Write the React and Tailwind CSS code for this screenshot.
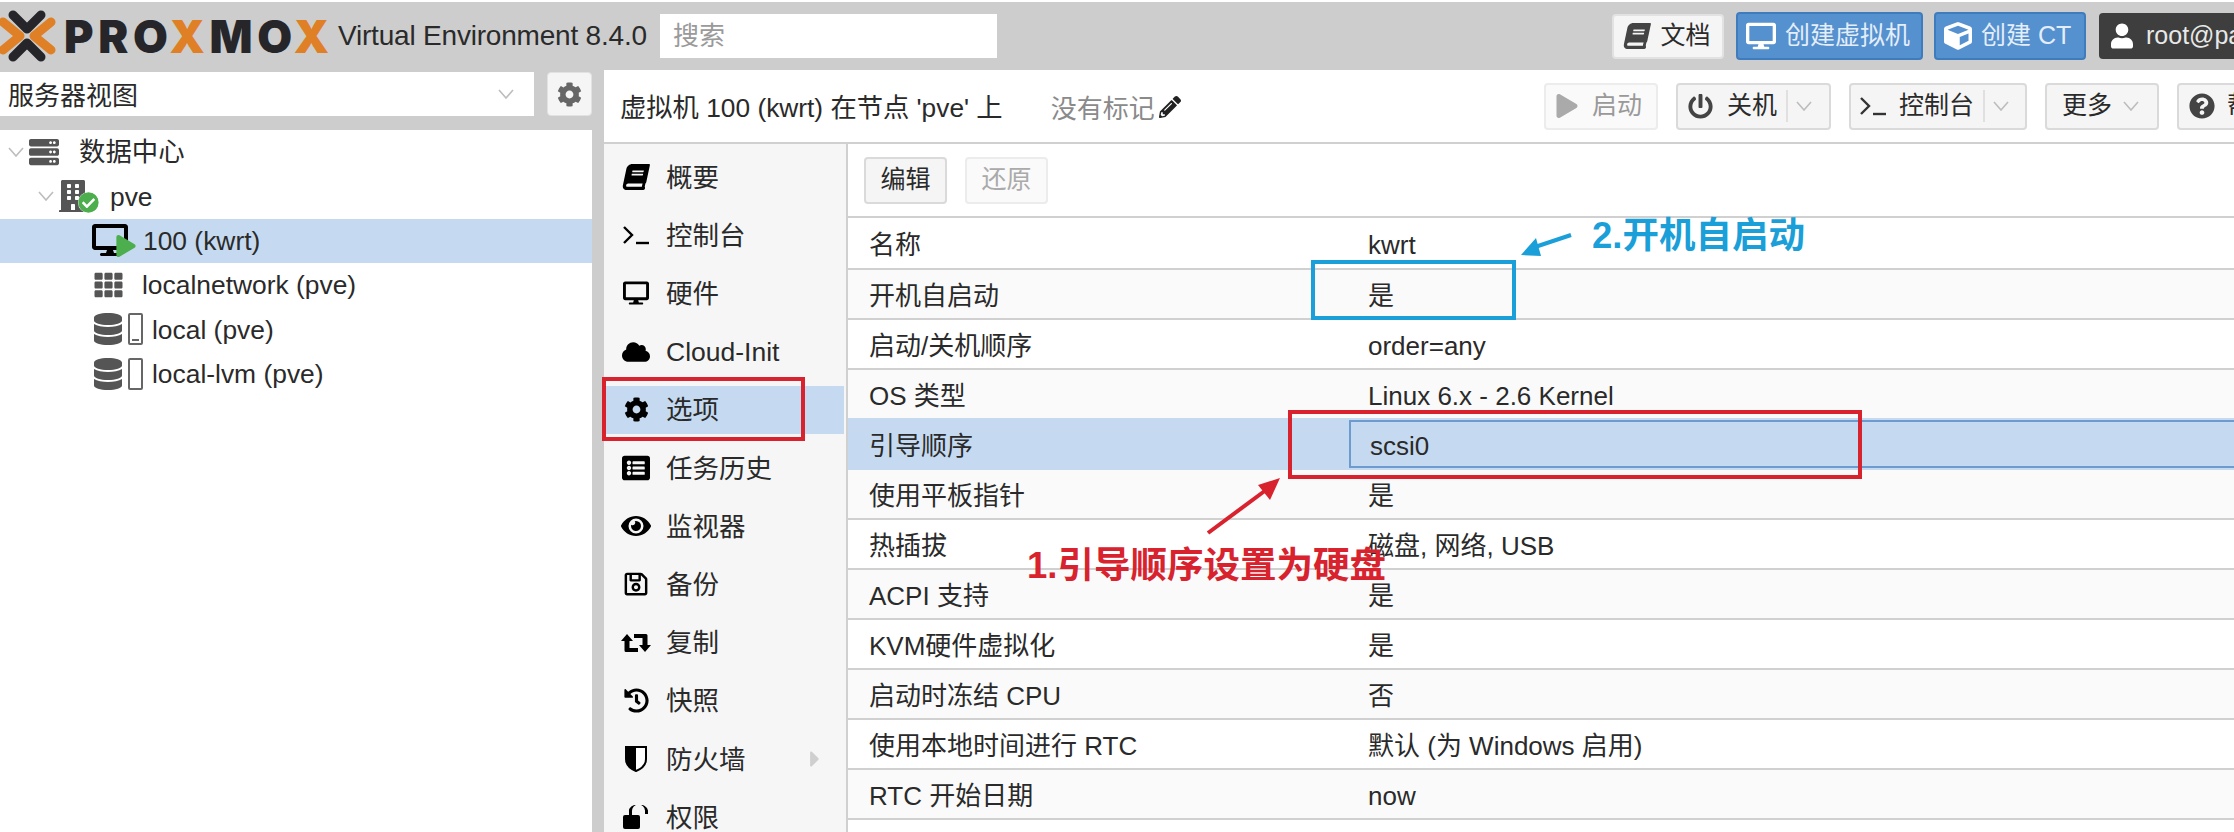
import React from 'react';
import {
    FaBook, FaDesktop, FaCube, FaUser, FaPlay, FaPowerOff, FaQuestionCircle, FaCog, FaCloud,
    FaEye, FaRegSave, FaHistory, FaServer, FaBuilding,
    FaDatabase, FaTh, FaPencilAlt, FaCheckCircle, FaListAlt, FaCaretRight
} from 'react-icons/fa';

const Chevron = ({ className = '' }) => (
    <svg viewBox="0 0 16 10" className={`w-[16px] h-[10px] ${className}`} fill="none" stroke="#bdbdbd" strokeWidth="1.6">
        <path d="M1 1l7 8 7-8" />
    </svg>
);

const Prompt = ({ className = '' }) => (
    <svg viewBox="0 0 26 20" className={`w-[26px] h-[20px] ${className}`} fill="none" stroke="currentColor" strokeWidth="2.4">
        <path d="M1 2l8 8-8 8" />
        <path d="M13 18h13" />
    </svg>
);

const SlantBook = ({ className = '' }) => <FaBook className={`-skew-x-12 ${className}`} />;

const Retweet = () => (
    <svg viewBox="0 0 30 20" className="w-[30px] h-[20px] shrink-0" fill="currentColor">
        <path d="M0 8L6 1l6 7H8.500v7H17v4H5a1.500 1.500 0 0 1-1.500-1.500V8z" />
        <path d="M30 12l-6 7-6-7h3.500V5H13V1h12a1.500 1.500 0 0 1 1.500 1.500V12z" />
    </svg>
);

const HalfShield = ({ className = '' }) => (
    <svg viewBox="0 0 22 26" className={className}>
        <path d="M1 1h20v12c0 6-5 10-10 12C6 23 1 19 1 13z" fill="#fff" stroke="#000" strokeWidth="2" />
        <path d="M1 1h10v24C6 23 1 19 1 13z" fill="#000" />
    </svg>
);

const OpenLock = ({ className = '' }) => (
    <svg viewBox="0 0 26 24" className={className} fill="currentColor">
        <rect x="0" y="10" width="17" height="14" rx="2" />
        <path d="M9 11V6.500a6.500 6.500 0 0 1 13-1V9h3V5.500a8.500 6 0 0 0-19 1V11z" />
    </svg>
);

// orange chevrons on the sides, dark ones above and below
const ProxmoxMark = () => (
    <svg viewBox="0 0 56 56" className="w-[56px] h-[56px] shrink-0" fill="none" strokeWidth="9" strokeLinecap="round" strokeLinejoin="round">
        <path d="M3 14l17 14L3 42" stroke="#e08026" />
        <path d="M51 14L34 28l17 14" stroke="#e08026" />
        <path d="M13 7l14 14L41 7" stroke="#26262a" />
        <path d="M13 49l14-14 14 14" stroke="#26262a" />
    </svg>
);

const treeRows = [
    { name: '数据中心', icon: 'dc', pad: 'pl-[79px]' },
    { name: 'pve', icon: 'node', pad: 'pl-[110px]' },
    { name: '100 (kwrt)', icon: 'vm', pad: 'pl-[143px]', selected: true },
    { name: 'localnetwork (pve)', icon: 'net', pad: 'pl-[142px]' },
    { name: 'local (pve)', icon: 'local', pad: 'pl-[152px]' },
    { name: 'local-lvm (pve)', icon: 'lvm', pad: 'pl-[152px]' },
];

const TreeIcon = ({ type }) => {
    if (type === 'dc') {
        return (
            <span className="absolute left-[8px] flex items-center gap-[4px]">
                <Chevron />
                <FaServer className="w-[32px] h-[30px] text-[#555]" />
            </span>
        );
    }
    if (type === 'node') {
        return (
            <span className="absolute left-[38px] flex items-center gap-[5px]">
                <Chevron />
                <span className="relative w-[40px] h-[32px]">
                    <FaBuilding className="w-[28px] h-[32px] text-[#555]" />
                    <FaCheckCircle className="absolute right-[0px] bottom-[-1px] w-[21px] h-[21px] text-[#4cae4c] bg-white rounded-full" />
                </span>
            </span>
        );
    }
    if (type === 'vm') {
        return (
            <span className="absolute left-[92px] w-[44px] h-[36px]">
                <FaDesktop className="w-[36px] h-[34px] text-black" />
                <FaPlay className="absolute right-[0px] top-[12px] w-[20px] h-[22px] text-[#4cae4c]" />
            </span>
        );
    }
    if (type === 'net') {
        return <FaTh className="absolute left-[92px] w-[33px] h-[28px] text-[#555]" />;
    }
    return (
        <span className="absolute left-[93px] flex items-center gap-[5px]">
            <FaDatabase className="w-[30px] h-[32px] text-[#555]" />
            <span className="relative block w-[15px] h-[32px] border-2 border-[#666] rounded-[2px]">
                {type === 'local' && <span className="absolute bottom-[2px] left-[2px] w-[7px] h-[2px] bg-[#666]" />}
            </span>
        </span>
    );
};

const navItems = [
    { name: '概要', icon: SlantBook, size: 'w-[26px] h-[26px]' },
    { name: '控制台', icon: Prompt },
    { name: '硬件', icon: FaDesktop, size: 'w-[26px] h-[26px]' },
    { name: 'Cloud-Init', icon: FaCloud, size: 'w-[28px] h-[28px]' },
    { name: '选项', icon: FaCog, size: 'w-[25px] h-[25px]', active: true },
    { name: '任务历史', icon: FaListAlt, size: 'w-[28px] h-[28px]' },
    { name: '监视器', icon: FaEye, size: 'w-[30px] h-[30px]' },
    { name: '备份', icon: FaRegSave, size: 'w-[26px] h-[26px]' },
    { name: '复制', icon: Retweet },
    { name: '快照', icon: FaHistory, size: 'w-[25px] h-[25px]' },
    { name: '防火墙', icon: HalfShield, size: 'w-[22px] h-[26px]', more: true },
    { name: '权限', icon: OpenLock, size: 'w-[26px] h-[24px]' },
];

const optionRows = [
    ['名称', 'kwrt'],
    ['开机自启动', '是'],
    ['启动/关机顺序', 'order=any'],
    ['OS 类型', 'Linux 6.x - 2.6 Kernel'],
    ['引导顺序', 'scsi0'],
    ['使用平板指针', '是'],
    ['热插拔', '磁盘, 网络, USB'],
    ['ACPI 支持', '是'],
    ['KVM硬件虚拟化', '是'],
    ['启动时冻结 CPU', '否'],
    ['使用本地时间进行 RTC', '默认 (为 Windows 启用)'],
    ['RTC 开始日期', 'now'],
];

const rowColor = (label, i) => {
    if (label === '引导顺序' || label === 'OS 类型') {
        return label === '引导顺序' ? 'bg-[#c5daf0] border-[#c5daf0]' : 'bg-[#fafafa] border-[#c5daf0]';
    }
    return i % 2 ? 'bg-[#fafafa] border-[#d0d0d0]' : 'bg-white border-[#d0d0d0]';
};

const ToolButton = ({ className = '', children }) => (
    <div className={`h-[47px] flex items-center rounded-[4px] border-2 border-[#dadada] bg-[#f5f5f5] text-[25px] ${className}`}>
        {children}
    </div>
);

const App = () => {
    return (
        <div className="relative w-[2234px] h-[832px] overflow-hidden bg-[#cdcdcd] text-[25px] text-[#2a2a2a] font-['Liberation_Sans','Noto_Sans_CJK_SC',sans-serif]">
            <div className="h-[2px] bg-white" />

            <header className="h-[68px] flex items-center">
                <ProxmoxMark />
                <span className="ml-[8px] w-[268px] text-[45px] leading-none font-black tracking-[4.700px] text-[#26262a] font-['Inter',sans-serif]">
                    PRO<span className="text-[#e08026]">X</span>MO<span className="text-[#e08026]">X</span>
                </span>
                <span className="ml-[6px] w-[322px] text-[28px] tracking-[-0.2px] whitespace-nowrap">Virtual Environment 8.4.0</span>
                <div className="w-[337px] h-[44px] bg-white flex items-center pl-[13px] text-[26px] text-[#9a9a9a]">搜索</div>
                <div className="ml-auto flex items-center">
                    <div className="w-[112px] h-[45px] flex items-center justify-center gap-[11px] rounded-[4px] bg-[#f5f5f5] border-2 border-[#e2e2e2]">
                        <SlantBook className="w-[24px] h-[26px] text-[#444]" />
                        <span>文档</span>
                    </div>
                    <div className="ml-[12px] w-[187px] h-[48px] flex items-center pl-[8px] gap-[9px] rounded-[4px] bg-[#5590cf] border-2 border-[#3f7cbd] text-[#e4eef8]">
                        <FaDesktop className="w-[30px] h-[30px] text-white" />
                        <span>创建虚拟机</span>
                    </div>
                    <div className="ml-[11px] w-[152px] h-[48px] flex items-center pl-[8px] gap-[9px] rounded-[4px] bg-[#5590cf] border-2 border-[#3f7cbd] text-[#e4eef8] whitespace-nowrap">
                        <FaCube className="w-[28px] h-[30px] text-white" />
                        <span>创建 CT</span>
                    </div>
                    <div className="ml-[13px] w-[135px] h-[46px] flex items-center pl-[12px] gap-[13px] rounded-l-[4px] bg-[#3e3e3e] text-[#e8e8e8] overflow-hidden whitespace-nowrap">
                        <FaUser className="w-[22px] h-[26px] text-white shrink-0" />
                        <span>root@pam</span>
                    </div>
                </div>
            </header>

            <div className="flex h-[762px] text-[26px]">
                <aside className="w-[592px] flex flex-col pt-[2px]">
                    <div className="flex justify-between h-[44px]">
                        <div className="w-[534px] bg-white flex items-center justify-between pl-[8px] pr-[20px]">
                            <span className="pt-[5px]">服务器视图</span>
                            <Chevron />
                        </div>
                        <div className="w-[45px] flex items-center justify-center rounded-[4px] bg-[#f5f5f5] border border-[#e2e2e2]">
                            <FaCog className="w-[25px] h-[25px] text-[#666]" />
                        </div>
                    </div>
                    <div className="mt-[14px] flex-1 bg-white text-[26.400px]">
                        {treeRows.map((row) => (
                            <div
                                key={row.name}
                                className={`relative h-[44.3px] flex items-center ${row.pad} ${row.selected ? 'bg-[#c5daf0]' : ''}`}
                            >
                                <TreeIcon type={row.icon} />
                                <span className="pt-[2px]">{row.name}</span>
                            </div>
                        ))}
                    </div>
                </aside>

                <main className="ml-[12px] flex-1 bg-white flex flex-col">
                    <div className="h-[74px] shrink-0 flex items-center border-b-2 border-[#d0d0d0] pl-[16px]">
                        <span className="pt-[6px] text-[26.300px]">虚拟机 100 (kwrt) 在节点 'pve' 上</span>
                        <span className="ml-[48px] pt-[6px] text-[#8a8a8a]">没有标记</span>
                        <FaPencilAlt className="ml-[4px] mt-[2px] w-[22px] h-[22px] text-[#222]" />
                        <div className="ml-auto flex items-center gap-[18px]">
                            <ToolButton className="w-[114px] pl-[10px] gap-[14px] text-[#999] border-[#ececec]! bg-[#fafafa]!">
                                <FaPlay className="w-[22px] h-[24px] text-[#aaa]" />
                                <span>启动</span>
                            </ToolButton>
                            <ToolButton className="w-[155px] pl-[10px]">
                                <FaPowerOff className="w-[25px] h-[27px] text-[#444]" />
                                <span className="ml-[14px]">关机</span>
                                <span className="ml-[9px] h-[32px] w-[2px] bg-[#e0e0e0]" />
                                <Chevron className="ml-[8px]" />
                            </ToolButton>
                            <ToolButton className="w-[178px] pl-[9px]">
                                <Prompt className="text-[#333]" />
                                <span className="ml-[13px]">控制台</span>
                                <span className="ml-[9px] h-[32px] w-[2px] bg-[#e0e0e0]" />
                                <Chevron className="ml-[8px]" />
                            </ToolButton>
                            <ToolButton className="w-[114px] pl-[15px]">
                                <span>更多</span>
                                <Chevron className="ml-[11px]" />
                            </ToolButton>
                            <ToolButton className="w-[80px] pl-[10px] -mr-[23px] overflow-hidden whitespace-nowrap rounded-r-none">
                                <FaQuestionCircle className="w-[26px] h-[26px] text-[#444] shrink-0" />
                                <span className="ml-[12px]">帮助</span>
                            </ToolButton>
                        </div>
                    </div>

                    <div className="flex flex-1 min-h-0">
                        <nav className="w-[244px] shrink-0 pt-[9px] flex flex-col gap-[10.2px] bg-[#f6f6f6] border-r-2 border-[#d0d0d0] text-[26.500px]">
                            {navItems.map((item) => (
                                <div
                                    key={item.name}
                                    className={`relative h-[48px] shrink-0 mr-[2px] flex items-center pl-[62px] ${item.active ? 'bg-[#c5daf0]' : ''}`}
                                >
                                    <span className="absolute left-[17px] w-[30px] h-[30px] flex items-center justify-center text-black">
                                        <item.icon className={item.size} />
                                    </span>
                                    <span className="pt-[3px]">{item.name}</span>
                                    {item.more && <FaCaretRight className="absolute right-[20px] w-[18px] h-[26px] text-[#cfcfcf]" />}
                                </div>
                            ))}
                        </nav>
                        <section className="flex-1 flex flex-col">
                            <div className="h-[74px] shrink-0 flex items-center gap-[18px] pl-[16px] border-b-2 border-[#d0d0d0]">
                                <ToolButton className="w-[83px] justify-center">编辑</ToolButton>
                                <ToolButton className="w-[83px] justify-center text-[#aaa] border-[#ececec]! bg-[#fafafa]!">还原</ToolButton>
                            </div>
                            {optionRows.map(([label, value], i) => (
                                <div
                                    key={label}
                                    className={`${i === 0 ? 'h-[52px]' : 'h-[50px]'} shrink-0 flex items-center border-b-2 ${rowColor(label, i)}`}
                                >
                                    <div className="w-[501px] pl-[21px] pt-[4px] shrink-0">{label}</div>
                                    <div className={`flex-1 h-full flex items-center pl-[19px] pt-[4px] ${label === '引导顺序' ? 'border-2 border-r-0 border-[#6d9bcf]' : ''}`}>{value}</div>
                                </div>
                            ))}
                        </section>
                    </div>
                </main>
            </div>

            {/* annotations drawn on top of the screenshot */}
            <div className="absolute left-[602px] top-[377px] w-[203px] h-[64px] border-[4px] border-[#d8232f]" />
            <div className="absolute left-[1288px] top-[410px] w-[574px] h-[69px] border-[4px] border-[#d8232f]" />
            <div className="absolute left-[1311px] top-[260px] w-[205px] h-[60px] border-[4px] border-[#1b9fd8]" />
            <svg className="absolute left-0 top-0 w-[2234px] h-[832px] pointer-events-none" viewBox="0 0 2234 832">
                <path d="M1208 533L1266 490" stroke="#d8232f" strokeWidth="4" fill="none" />
                <polygon points="1280,478 1270,500 1258,485" fill="#d8232f" />
                <path d="M1571 235L1532 248" stroke="#1b9fd8" strokeWidth="4" fill="none" />
                <polygon points="1521,255 1536,238 1541,256" fill="#1b9fd8" />
            </svg>
            <span className="absolute left-[1027px] top-[543px] text-[36.500px] leading-[46px] font-bold text-[#d8232f] whitespace-nowrap">1.引导顺序设置为硬盘</span>
            <span className="absolute left-[1592px] top-[212px] text-[36.500px] leading-[48px] font-bold text-[#1b9fd8] whitespace-nowrap">2.开机自启动</span>
        </div>
    );
};

export default App;
